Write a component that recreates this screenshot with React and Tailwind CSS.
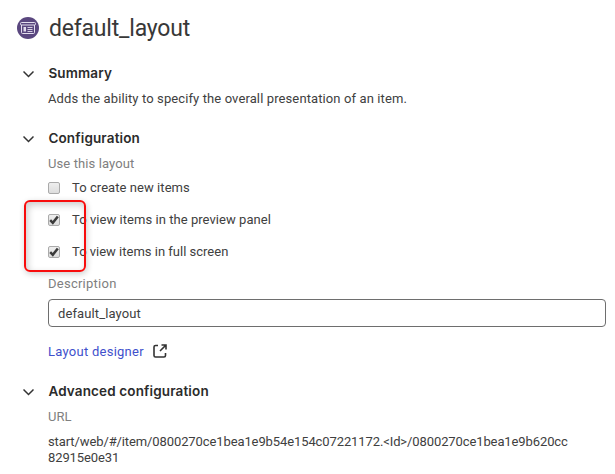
function Chevron() {
  return (
    <svg className="mt-px ml-[23px] mr-[14px] h-3 w-[11px] shrink-0" viewBox="0 0 11 12" fill="none" stroke="#333" strokeWidth="1.5">
      <path d="M.5 3.5 5.5 8.5 10.5 3.5" />
    </svg>
  );
}

function Heading({ children }) {
  return (
    <h2 className="flex h-5 items-center font-[Inter,sans-serif] text-[13.5px] font-semibold tracking-[0.14px] text-[#2b2b2b]">
      <Chevron />
      <span className="pl-[0.4px]">{children}</span>
    </h2>
  );
}

function Option({ checked, label, spacing }) {
  return (
    <label className="flex h-8 items-center">
      <span className="mr-[12px] flex size-3 shrink-0 items-center justify-center rounded-[2px] border border-[#aaa] bg-linear-to-b from-[#eee] to-[#ddd]">
        {checked && (
          <svg className="size-[10px]" viewBox="0 0 10 10" fill="none" stroke="#3b3b3b" strokeWidth="2.5">
            <path d="M1.2 5.2 3.8 7.8 8.8 1.4" />
          </svg>
        )}
      </span>
      <span className={spacing}>{label}</span>
    </label>
  );
}

export default function App() {
  return (
    <main className="relative h-[474px] w-[615px] overflow-hidden bg-white font-[Roboto,sans-serif] text-[13px] leading-4 text-[#404040]">
      <header className="flex h-[63px] items-center pb-[7px] pl-[17px]">
        <svg className="size-[22px]" viewBox="0 0 22 22" fill="none">
          <circle cx="11" cy="11" r="11" fill="#5a477f" />
          <rect x="3.5" y="5.5" width="15" height="2.5" rx="1" stroke="#e3deee" />
          <path d="M4.5 8v7.5q0 1 1 1h11q1 0 1-1V8" stroke="#e3deee" />
          <rect x="6.5" y="10" width="2.5" height="4.5" fill="#e3deee" />
          <path d="M10.5 10.5H15.5M10.5 12.5H15.5M10.5 14.5H15.5" stroke="#e3deee" strokeWidth=".9" />
        </svg>
        <h1 className="mt-px ml-[10px] text-[23px] leading-8 tracking-[-0.2px] text-[#383838]">default_layout</h1>
      </header>
      <Heading>Summary</Heading>
      <p className="mt-2 ml-12 h-4 tracking-[0.11px]">Adds the ability to specify the overall presentation of an item.</p>
      <div className="h-[21px]" />
      <Heading>Configuration</Heading>
      <section className="ml-12">
        <p className="mt-2 tracking-[0.1px] text-[#808080]">Use this layout</p>
        <div className="h-24">
          <Option label="To create new items" spacing="tracking-[0.06px]" />
          <Option checked label="To view items in the preview panel" spacing="tracking-[0.05px]" />
          <Option checked label="To view items in full screen" />
        </div>
        <p className="mt-2 tracking-[0.25px] text-[#808080]">Description</p>
        <div className="mt-[7px] flex h-7 w-[558px] items-center rounded-[4px] border border-[#6e6e6e] pt-px pl-[9px] tracking-[0.12px]">default_layout</div>
        <a className="mt-4 flex h-4 items-center text-[#4050cc]">
          <span className="pt-px tracking-[0.26px]">Layout designer</span>
          <svg className="ml-[9px] size-[14px]" viewBox="0 0 14 14" fill="none" stroke="#333" strokeWidth="1.6">
            <path d="M5 1.5H2.5Q1 1.5 1 3v8.5Q1 13 2.5 13H11q1.5 0 1.5-1.5V9M8.5 1H13v4.5M13 1 7 7" />
          </svg>
        </a>
      </section>
      <div className="h-[22px]" />
      <Heading>Advanced configuration</Heading>
      <section className="ml-12">
        <p className="mt-2 text-[#808080]">URL</p>
        <p className="mt-[9px] tracking-[-0.105px]">start/web/#/item/0800270ce1bea1e9b54e154c07221172.&lt;Id&gt;/0800270ce1bea1e9b620cc<br />82915e0e31</p>
      </section>
      <div className="absolute top-[200px] left-[24px] h-[72px] w-[62px] rounded-[6px] border-2 border-[#f80c0c] shadow-[1px_2px_6px_#0003,inset_2px_3px_7px_#0003]" />
    </main>
  );
}
